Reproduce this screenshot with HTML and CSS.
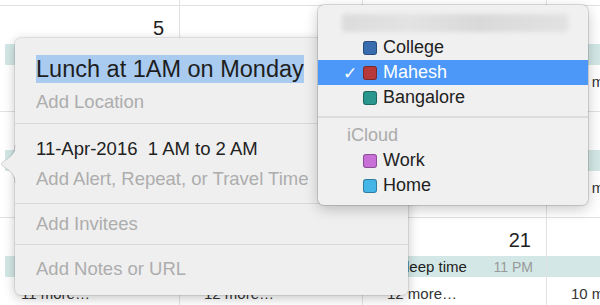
FILE: index.html
```html
<!DOCTYPE html>
<html lang="en">
<head>
    <meta charset="UTF-8">
    <meta name="viewport" content="width=device-width, initial-scale=1.0">
    <title>Calendar - New Event</title>
    <link rel="stylesheet" href="styles.css">
</head>
<body>
    <div class="calendar">
        <div class="cell"></div>
        <div class="cell"></div>
        <div class="cell"></div>
        <div class="cell"></div>

        <div class="cell">
            <div class="date">5</div>
            <div class="event"></div>
            <div class="more">11 more…</div>
        </div>
        <div class="cell">
            <div class="date">6</div>
            <div class="event"></div>
            <div class="more">9 more…</div>
        </div>
        <div class="cell">
            <div class="date">7</div>
            <div class="event"></div>
            <div class="more">12 more…</div>
        </div>
        <div class="cell">
            <div class="date">8</div>
            <div class="event"></div>
            <div class="more">10 more…</div>
        </div>

        <div class="cell">
            <div class="date">12</div>
            <div class="event"></div>
            <div class="more">11 more…</div>
        </div>
        <div class="cell">
            <div class="date">13</div>
            <div class="event"></div>
            <div class="more">12 more…</div>
        </div>
        <div class="cell">
            <div class="date">14</div>
            <div class="event"></div>
            <div class="more">12 more…</div>
        </div>
        <div class="cell">
            <div class="date">15</div>
            <div class="event"></div>
            <div class="more">10 more…</div>
        </div>

        <div class="cell">
            <div class="date">19</div>
            <div class="event"></div>
            <div class="more">11 more…</div>
        </div>
        <div class="cell">
            <div class="date">20</div>
            <div class="event"></div>
            <div class="more">12 more…</div>
        </div>
        <div class="cell">
            <div class="date">21</div>
            <div class="event">
                <span class="event-name">Sleep time</span>
                <span class="event-time">11 PM</span>
            </div>
            <div class="more">12 more…</div>
        </div>
        <div class="cell">
            <div class="date">22</div>
            <div class="event"></div>
            <div class="more">10 more…</div>
        </div>
    </div>

    <div class="popover">
        <svg class="arrow" width="16" height="38" viewBox="0 0 16 38">
            <path d="M16,0 C16,9 9,13 4,16 C0.5,18 0.5,20 4,22 C9,25 16,29 16,38 Z" fill="#efefef"/>
            <path d="M15,0 C15,9 9,13 4,16 C0.5,18 0.5,20 4,22 C9,25 15,29 15,38" fill="none" stroke="rgba(0,0,0,0.14)" stroke-width="1"/>
        </svg>
        <div class="section head">
            <span class="title">Lunch at 1AM on Monday</span>
            <div class="hint location">Add Location</div>
        </div>
        <div class="section when">
            <div class="line">11-Apr-2016&nbsp; 1 AM to 2 AM</div>
            <div class="hint alert">Add Alert, Repeat, or Travel Time</div>
        </div>
        <div class="section invitees">
            <div class="hint">Add Invitees</div>
        </div>
        <div class="section notes">
            <div class="hint">Add Notes or URL</div>
        </div>
    </div>

    <div class="menu">
        <div class="menu-account"><div class="blurred"></div></div>
        <div class="menu-item">
            <span class="check"></span><span class="swatch college"></span>College
        </div>
        <div class="menu-item selected">
            <span class="check">✓</span><span class="swatch mahesh"></span>Mahesh
        </div>
        <div class="menu-item">
            <span class="check"></span><span class="swatch bangalore"></span>Bangalore
        </div>
        <div class="menu-sep"></div>
        <div class="menu-header">iCloud</div>
        <div class="menu-item">
            <span class="check"></span><span class="swatch work"></span>Work
        </div>
        <div class="menu-item">
            <span class="check"></span><span class="swatch home"></span>Home
        </div>
    </div>
</body>
</html>
```

FILE: styles.css
```css
body {
    margin: 0;
    width: 600px;
    height: 305px;
    overflow: hidden;
    position: relative;
    background-color: white;
    font-family: "Liberation Sans", Arial, sans-serif;
    color: #222;
}

/* month grid behind the popovers */
.calendar {
    display: grid;
    grid-template-columns: 183px 183px 184px 183px;
    grid-auto-rows: 106px;
    margin: -100px 0 0 -3px;
}
.cell {
    box-sizing: border-box;
    border-right: 1px solid #e2e2e2;
    border-bottom: 1px solid #e2e2e2;
    padding-top: 10px;
}
.date {
    font-size: 20px;
    line-height: 24px;
    text-align: right;
    padding-right: 15px;
}
.event {
    display: flex;
    justify-content: space-between;
    align-items: center;
    height: 21px;
    margin: 4px 0 0 8px;
    padding: 0 13px 0 25px;
    background-color: #d3e8e6;
    font-size: 15px;
}
.cell:nth-child(4n) .event {
    margin-left: 0;
}
.event-time {
    font-size: 14px;
    color: #999;
}
.more {
    margin-top: 8px;
    padding-left: 24px;
    font-size: 15px;
    line-height: 18px;
    color: #333;
}

/* event popover */
.popover {
    position: absolute;
    left: 15px;
    top: 38px;
    width: 393px;
    background-color: #efefef;
    border-radius: 6px;
    box-shadow: 0 0 0 1px rgba(0,0,0,0.08), 0 3px 12px rgba(0,0,0,0.24);
}
.arrow {
    position: absolute;
    left: -15px;
    top: 107px;
}
.section {
    padding-left: 21px;
    font-size: 18.5px;
    line-height: 21px;
}
.section + .section {
    border-top: 1px solid #d8d8d8;
}
.head {
    padding-top: 17px;
    padding-bottom: 11px;
}
.title {
    display: inline-block;
    font-size: 23.5px;
    line-height: 28px;
    background-color: #aacbf0;
    color: #1e1e1e;
}
.location {
    margin-top: 8px;
}
.hint {
    color: #adadad;
}
.when {
    padding-top: 14px;
    padding-bottom: 14px;
}
.alert {
    margin-top: 9px;
}
.invitees {
    padding-top: 9px;
    padding-bottom: 10px;
}
.notes {
    padding-top: 13px;
    padding-bottom: 16px;
}

/* calendar picker menu */
.menu {
    position: absolute;
    left: 318px;
    top: 5px;
    width: 270px;
    padding: 5px 0 7px;
    background-color: #f0f0f0;
    border-radius: 6px;
    box-shadow: 0 0 0 1px rgba(0,0,0,0.13), 0 4px 14px rgba(0,0,0,0.22);
    font-size: 18px;
}
.menu-account {
    height: 25px;
    display: flex;
    align-items: center;
    padding: 0 20px 0 24px;
}
.blurred {
    flex: 1;
    height: 18px;
    border-radius: 4px;
    background: linear-gradient(90deg, #dcdcdc, #e3e3e3 30%, #d9d9d9 60%, #e2e2e2);
    filter: blur(2px);
}
.menu-item {
    height: 25px;
    display: flex;
    align-items: center;
    padding-left: 25px;
}
.menu-item.selected {
    background-color: #4b98f8;
    color: white;
}
.check {
    width: 20px;
    font-family: "DejaVu Sans", sans-serif;
    font-size: 17px;
    font-weight: bold;
}
.swatch {
    box-sizing: border-box;
    width: 14px;
    height: 14px;
    margin-right: 6px;
    border-radius: 3px;
    border: 1px solid rgba(0,0,0,0.3);
}
.college { background-color: #3a6cb0; }
.mahesh { background-color: #b8393a; }
.bangalore { background-color: #29978d; }
.work { background-color: #c870d8; }
.home { background-color: #43b5e6; }
.menu-sep {
    margin: 6px 0 5px;
    border-top: 2px solid #dcdcdc;
}
.menu-header {
    height: 25px;
    line-height: 25px;
    padding-left: 29px;
    color: #ababab;
}
```
